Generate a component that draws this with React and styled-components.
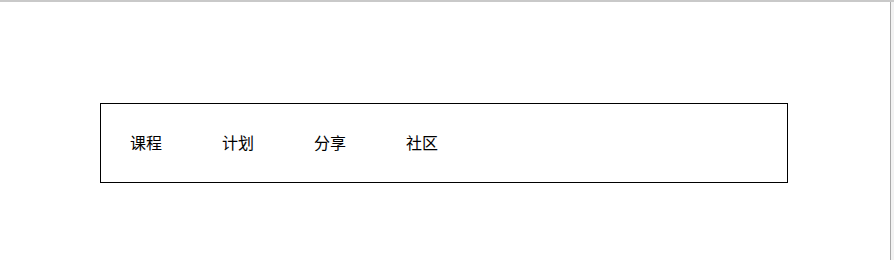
import React from "react";
import styled, { createGlobalStyle } from "styled-components";

const GlobalStyle = createGlobalStyle`
  html, body {
    margin: 0;
    padding: 0;
    background: #ffffff;
  }
  body {
    font-family: "Noto Sans CJK SC", "Liberation Sans", sans-serif;
  }
`;

const Frame = styled.div`
  display: flex;
  width: 894px;
  height: 260px;
  box-sizing: border-box;
  border-top: 2px solid #c9c9c9;
`;

const Page = styled.div`
  flex: 1;
  padding: 101px 0 0 100px;
  border-right: 1px solid #a8a8a8;
`;

const Gutter = styled.div`
  width: 3px;
  background: #f2f2f2;
`;

const Nav = styled.ul`
  display: flex;
  align-items: center;
  box-sizing: border-box;
  width: 688px;
  height: 80px;
  margin: 0;
  padding: 0 0 2px;
  list-style: none;
  border: 1px solid #000000;
`;

const NavItem = styled.li`
  padding: 0 31px 0 29px;
  font-size: 16px;
  line-height: 20px;
  color: #000000;
`;

const items = ["课程", "计划", "分享", "社区"];

export default function App() {
  return (
    <>
      <GlobalStyle />
      <Frame>
        <Page>
          <Nav>
            {items.map((label) => (
              <NavItem key={label}>{label}</NavItem>
            ))}
          </Nav>
        </Page>
        <Gutter />
      </Frame>
    </>
  );
}
